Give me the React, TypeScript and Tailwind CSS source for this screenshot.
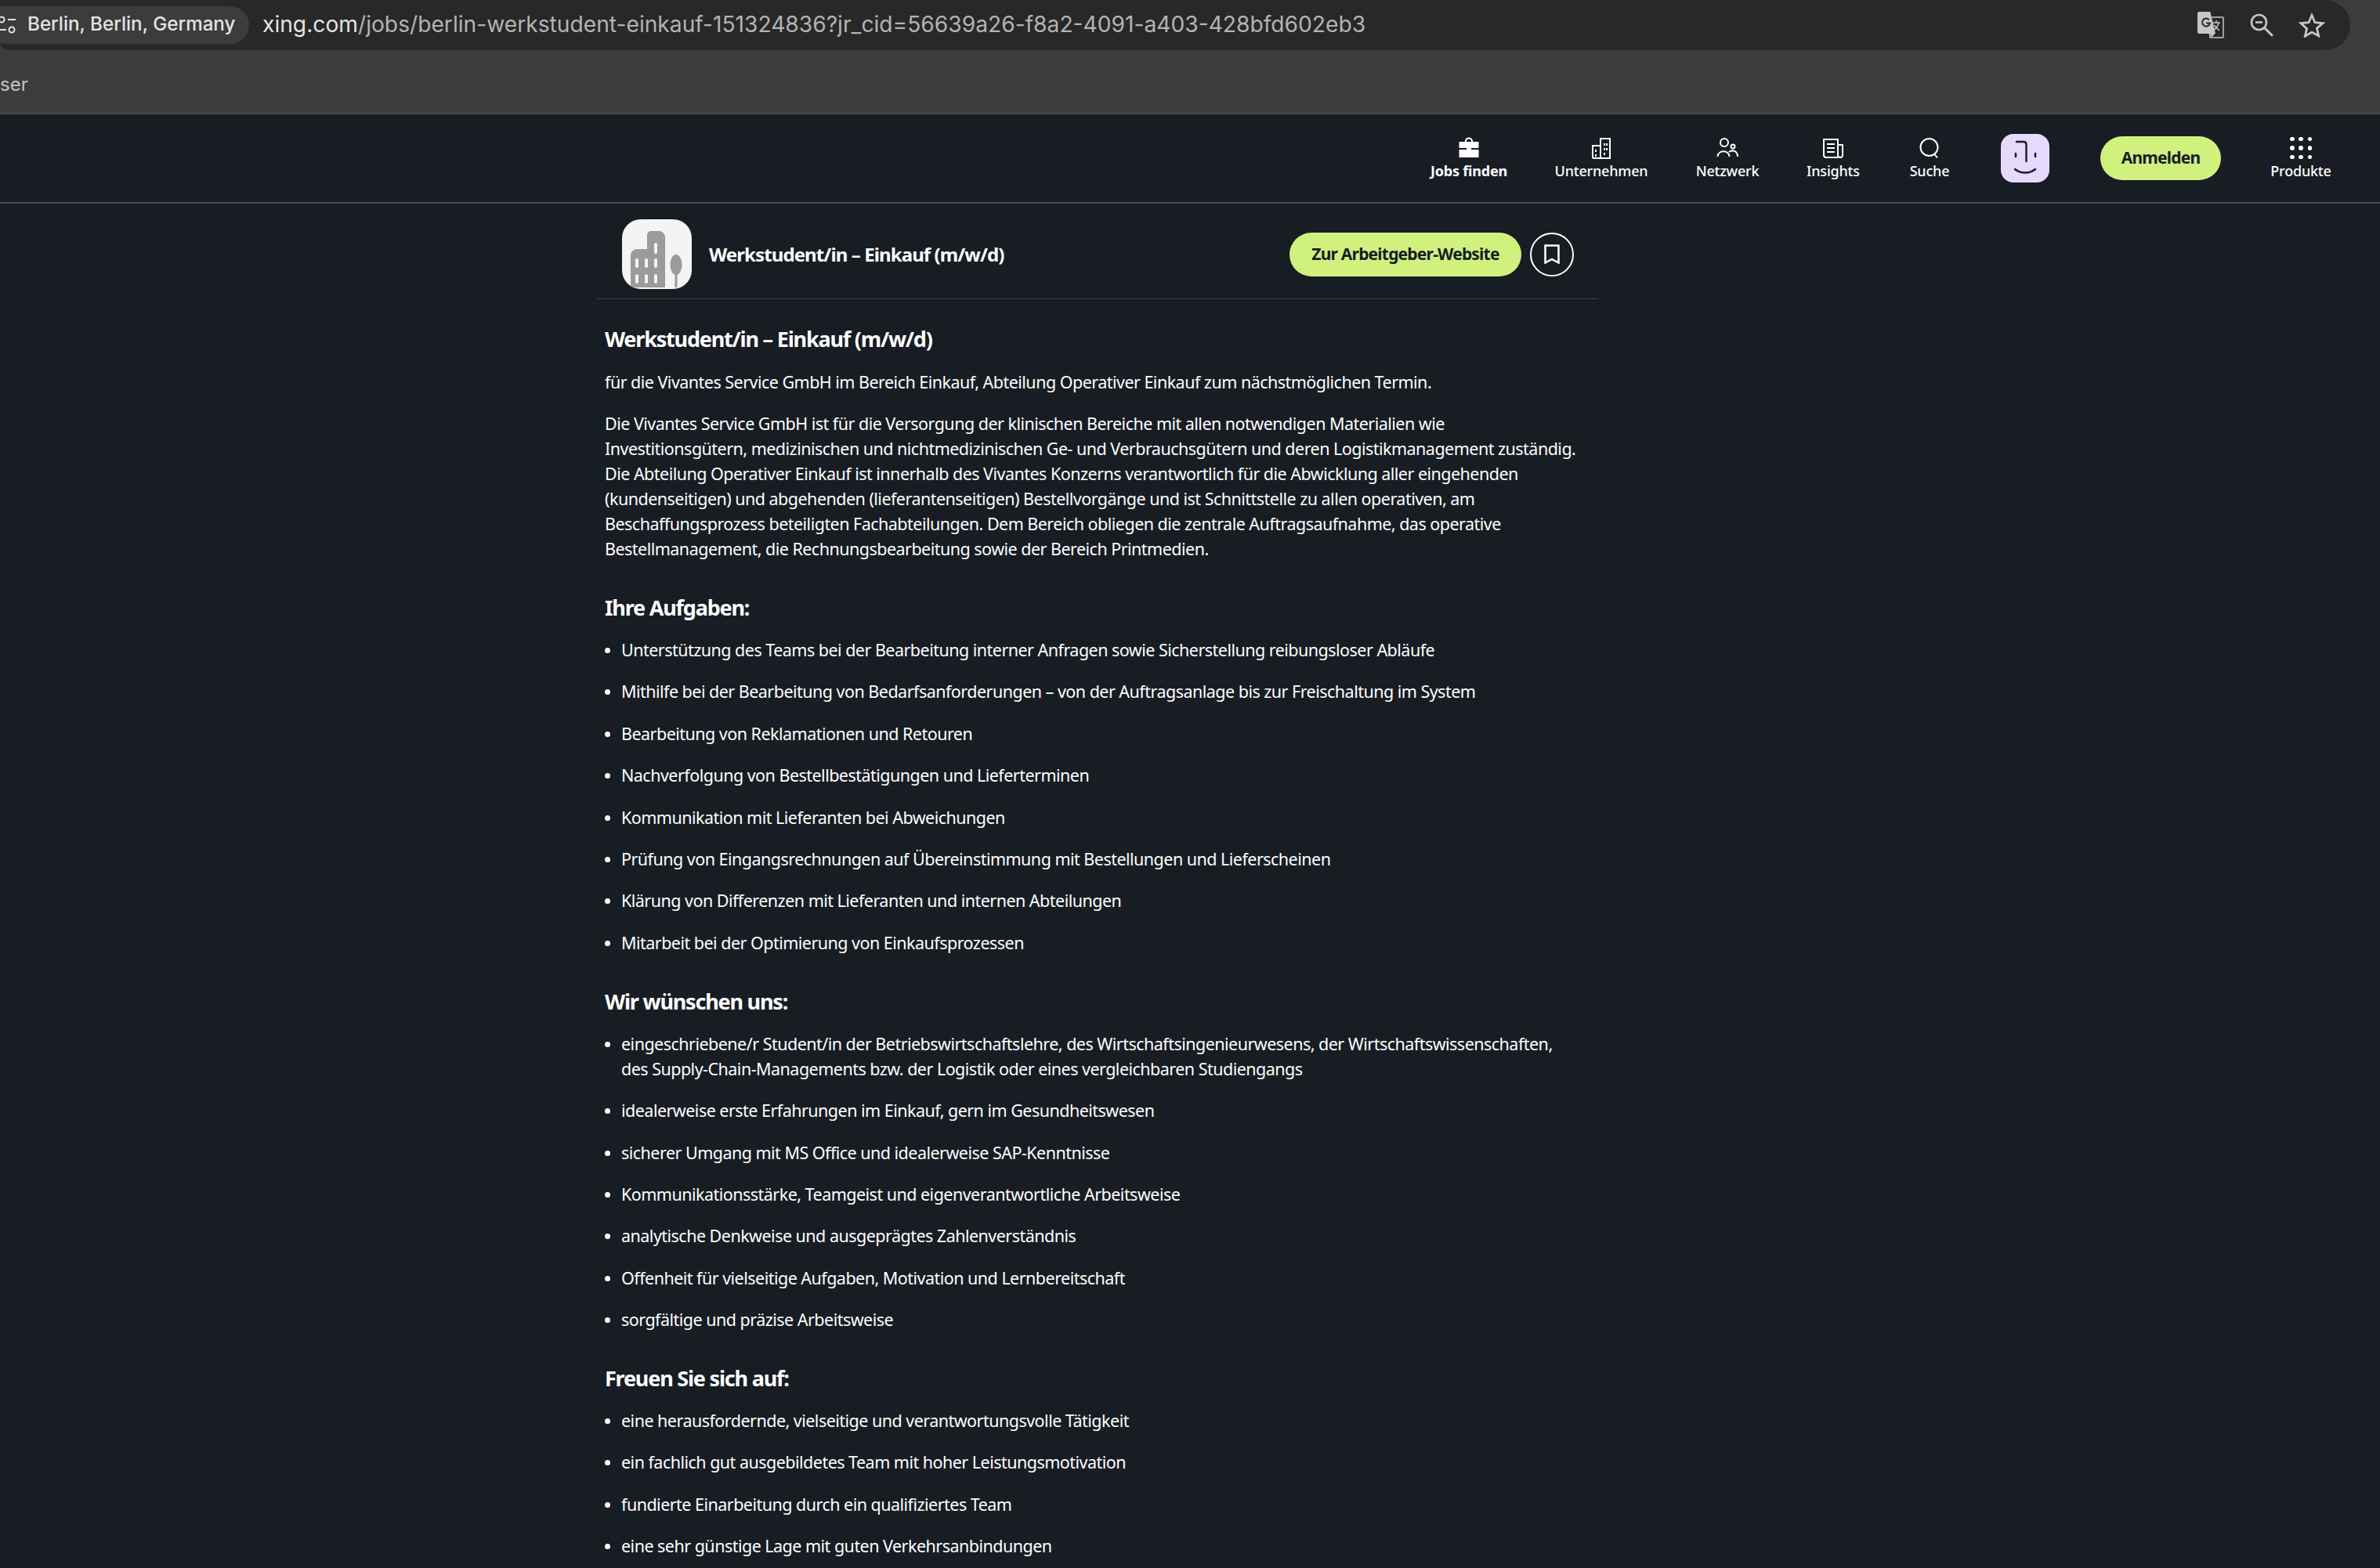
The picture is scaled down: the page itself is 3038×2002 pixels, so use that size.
import type { ReactNode } from 'react';

const NAV = [
  { label: 'Jobs finden', width: 'w-[140px]', icon: 'jobs', bold: true },
  { label: 'Unternehmen', width: 'w-[198px]', icon: 'company' },
  { label: 'Netzwerk', width: 'w-[124px]', icon: 'network' },
  { label: 'Insights', width: 'w-[146px]', icon: 'insights' },
  { label: 'Suche', width: 'w-[100px]', icon: 'search' },
];

const AUFGABEN = [
  'Unterstützung des Teams bei der Bearbeitung interner Anfragen sowie Sicherstellung reibungsloser Abläufe',
  'Mithilfe bei der Bearbeitung von Bedarfsanforderungen – von der Auftragsanlage bis zur Freischaltung im System',
  'Bearbeitung von Reklamationen und Retouren',
  'Nachverfolgung von Bestellbestätigungen und Lieferterminen',
  'Kommunikation mit Lieferanten bei Abweichungen',
  'Prüfung von Eingangsrechnungen auf Übereinstimmung mit Bestellungen und Lieferscheinen',
  'Klärung von Differenzen mit Lieferanten und internen Abteilungen',
  'Mitarbeit bei der Optimierung von Einkaufsprozessen',
];

const WUENSCHE: ReactNode[] = [
  <>eingeschriebene/r Student/in der Betriebswirtschaftslehre, des Wirtschaftsingenieurwesens, der Wirtschaftswissenschaften,<br />des Supply-Chain-Managements bzw. der Logistik oder eines vergleichbaren Studiengangs</>,
  'idealerweise erste Erfahrungen im Einkauf, gern im Gesundheitswesen',
  'sicherer Umgang mit MS Office und idealerweise SAP-Kenntnisse',
  'Kommunikationsstärke, Teamgeist und eigenverantwortliche Arbeitsweise',
  'analytische Denkweise und ausgeprägtes Zahlenverständnis',
  'Offenheit für vielseitige Aufgaben, Motivation und Lernbereitschaft',
  'sorgfältige und präzise Arbeitsweise',
];

const BENEFITS = [
  'eine herausfordernde, vielseitige und verantwortungsvolle Tätigkeit',
  'ein fachlich gut ausgebildetes Team mit hoher Leistungsmotivation',
  'fundierte Einarbeitung durch ein qualifiziertes Team',
  'eine sehr günstige Lage mit guten Verkehrsanbindungen',
];

function NavIcon({ name }: { name: string }) {
  const common = { width: 28, height: 28, viewBox: '0 0 28 28', fill: 'none', stroke: 'white', strokeWidth: 2 };
  if (name === 'jobs') {
    return (
      <svg {...common}>
        <path d="M10 6.500V5a4 3.500 0 0 1 8 0v1.500" />
        <rect x="1.500" y="6" width="25" height="8" fill="white" stroke="none" />
        <rect x="1.500" y="16" width="25" height="10" fill="white" stroke="none" />
        <rect x="11" y="13" width="6" height="3" fill="white" stroke="none" />
      </svg>
    );
  }
  if (name === 'company') {
    return (
      <svg {...common}>
        <path d="M3 27V11h10M13 27V2h12v25H3Z" />
        <path d="M7 16v3M7 22v3M18 8v3M21 8v3M18 14v3M21 14v3M18 20v3" strokeWidth={2} />
      </svg>
    );
  }
  if (name === 'network') {
    return (
      <svg {...common}>
        <circle cx="10" cy="7" r="5" />
        <circle cx="21" cy="12" r="2.500" />
        <path d="M1.500 25c0-9 15-9 15 0M16 19c4-3 11-2 11 6" />
      </svg>
    );
  }
  if (name === 'insights') {
    return (
      <svg {...common}>
        <path d="M20 26H5a3 3 0 0 1-3-3V3h18v20a3 3 0 0 0 6 0V10h-6" />
        <path d="M6 9h10M6 14h10M6 19h10" />
      </svg>
    );
  }
  return (
    <svg {...common}>
      <circle cx="13.500" cy="13" r="11" />
      <path d="M20 21.500l4 5" />
    </svg>
  );
}

function ToolbarIcons() {
  return (
    <div className="flex items-center">
      <svg width="34" height="34" viewBox="0 0 34 34" className="mr-[33px]">
        <path d="M13 7h19a1 1 0 0 1 1 1v24a1 1 0 0 1-1 1H16Z" fill="none" stroke="#c6c6c6" strokeWidth="1.500" />
        <path d="M2 0h14l1 3 6 25H2a2 2 0 0 1-2-2V2a2 2 0 0 1 2-2Z" fill="#c6c6c6" />
        <path d="M16 28h6l-4 5Z" fill="#c6c6c6" />
        <path d="M15 10.500a5 5 0 1 0 1 4h-5" fill="none" stroke="#282828" strokeWidth="2" />
        <path d="M19 14h10M24 11v3M27 14c-1 5-4 8-7 10M21 17l7 7" fill="none" stroke="#c6c6c6" strokeWidth="1.500" />
      </svg>
      <svg width="30" height="30" viewBox="0 0 30 30" className="mr-[32px]">
        <circle cx="11.500" cy="11.500" r="9.500" fill="none" stroke="#c6c6c6" strokeWidth="2.600" />
        <path d="M18.500 18.500L28 28" stroke="#c6c6c6" strokeWidth="3" strokeLinecap="round" />
        <path d="M7 11.500h9" stroke="#c6c6c6" strokeWidth="2.600" />
      </svg>
      <svg width="34" height="32" viewBox="0 0 34 32">
        <path d="M17 3.500l4 9.200 10 .9-7.600 6.500 2.300 9.700L17 25l-8.700 5.300 2.300-9.700L3 13.600l10-.9Z" fill="none" stroke="#c6c6c6" strokeWidth="2.800" strokeLinejoin="miter" />
      </svg>
    </div>
  );
}

function BrowserChrome() {
  return (
    <div className="h-[146px] bg-[#3c3c3c] border-b-2 border-[#4a4a4a]">
      <div className="h-[64px] w-[3000px] bg-[#282828] rounded-r-[32px] rounded-bl-[12px] flex items-center font-['Inter',sans-serif]">
        <div className="h-[48px] w-[318px] bg-[#3c3c3c] rounded-r-[24px] flex items-center shrink-0">
          <svg width="26" height="26" viewBox="0 0 26 26" className="ml-[-4px] mr-[13px] shrink-0">
            <circle cx="6" cy="6" r="3.500" fill="none" stroke="#e3e3e3" strokeWidth="2" />
            <path d="M14 6h10M2 19h10" stroke="#e3e3e3" strokeWidth="2" />
            <circle cx="19" cy="19" r="3.500" fill="none" stroke="#e3e3e3" strokeWidth="2" />
          </svg>
          <span className="text-[24.200px] font-medium text-[#e3e3e3] whitespace-nowrap mt-[-2px]">Berlin, Berlin, Germany</span>
        </div>
        <div className="ml-[17px] mt-[-2px] text-[28.200px] whitespace-nowrap text-[#b4b4b4]">
          <span className="text-[#e3e3e3]">xing.com</span>/jobs/berlin-werkstudent-einkauf-151324836?jr_cid=56639a26-f8a2-4091-a403-428bfd602eb3
        </div>
        <div className="ml-auto mr-[32px]">
          <ToolbarIcons />
        </div>
      </div>
      <div className="h-[80px] pt-[8px] flex items-center text-[24px] text-[#c2c2c2] font-['Inter',sans-serif]">ser</div>
    </div>
  );
}

function TopNav() {
  return (
    <header className="h-[114px] border-b-2 border-[#454b54] flex items-center justify-end pr-[23px] text-white">
      {NAV.map((item) => (
        <div key={item.label} className={`${item.width} flex flex-col items-center mt-[1px]`}>
          <NavIcon name={item.icon} />
          <span className={`text-[18px] tracking-[-0.2px] leading-[26px] mt-[2px] whitespace-nowrap ${item.bold ? 'font-bold' : 'font-medium'}`}>{item.label}</span>
        </div>
      ))}
      <div className="w-[144px] flex justify-center">
        <div className="w-[62px] h-[62px] rounded-[16px] bg-[#e5d9fc] flex items-center justify-center">
          <svg width="44" height="48" viewBox="0 0 44 48" fill="none" stroke="#1a1f27" strokeWidth="2.500" strokeLinecap="round">
            <path d="M11 3h9c2.500 0 3.500 2 3.500 4v21" />
            <path d="M10 18v4M35 18v4" />
            <path d="M9 38c7 6 19 6 26 0" />
          </svg>
        </div>
      </div>
      <div className="w-[202px] flex justify-center">
        <div className="w-[154px] h-[56px] rounded-full bg-[#d0f17e] text-[#181d24] font-bold text-[21px] tracking-[-0.8px] flex items-center justify-center">Anmelden</div>
      </div>
      <div className="w-[156px] flex flex-col items-center mt-[1px]">
        <div className="grid grid-cols-3 gap-x-[6px] gap-y-[6px] h-[28px] w-[28px]">
          {Array.from({ length: 9 }).map((_, i) => (
            <span key={i} className="w-[5.500px] h-[5.500px] rounded-full bg-white" />
          ))}
        </div>
        <span className="text-[18px] tracking-[-0.2px] leading-[26px] mt-[2px] font-medium">Produkte</span>
      </div>
    </header>
  );
}

function CompanyLogo() {
  return (
    <div className="w-[89px] h-[89px] rounded-[24px] bg-[#f4f4f4] overflow-hidden">
      <svg width="89" height="89" viewBox="0 0 89 89">
        <path d="M11 87V46a8 8 0 0 1 8-8h13V20a5 5 0 0 1 5-5h11a8 8 0 0 1 7 8v64Z" fill="#9b9b9b" />
        <rect x="41" y="30" width="4" height="14" rx="2" fill="#f4f4f4" />
        {[17, 29, 41].map((x) => (
          <g key={x}>
            <rect x={x} y="50" width="4" height="12" rx="2" fill="#f4f4f4" />
            <rect x={x} y="70" width="4" height="12" rx="2" fill="#f4f4f4" />
          </g>
        ))}
        <ellipse cx="69" cy="58" rx="7.500" ry="13" fill="#9b9b9b" />
        <rect x="67.500" y="65" width="3" height="22" fill="#9b9b9b" />
      </svg>
    </div>
  );
}

function JobHeader() {
  return (
    <div className="h-[122px] pt-[8px] w-[1278px] border-b border-[#3d424a] flex items-center pl-[32px] pr-[31px] text-white">
      <CompanyLogo />
      <h2 className="ml-[22px] text-[24px] font-bold tracking-[-0.9px] whitespace-nowrap">Werkstudent/in – Einkauf (m/w/d)</h2>
      <div className="ml-auto w-[296px] h-[56px] rounded-full bg-[#d0f17e] text-[#181d24] font-bold text-[21px] tracking-[-0.8px] flex items-center justify-center">Zur Arbeitgeber-Website</div>
      <div className="ml-[11px] w-[56px] h-[56px] rounded-full border-2 border-white flex items-center justify-center">
        <svg width="20" height="26" viewBox="0 0 20 26" fill="none" stroke="white" strokeWidth="2.500">
          <path d="M1.500 1.500h17v22L10 19l-8.500 4.500Z" />
        </svg>
      </div>
    </div>
  );
}

function BulletList({ items }: { items: ReactNode[] }) {
  return (
    <ul className="flex flex-col gap-[21.400px] mt-[20px]">
      {items.map((item, i) => (
        <li key={i} className="flex">
          <span className="w-[7px] h-[7px] rounded-full bg-white mt-[13px] mr-[14px] shrink-0" />
          <span>{item}</span>
        </li>
      ))}
    </ul>
  );
}

function SectionTitle({ children }: { children: ReactNode }) {
  return <h3 className="text-[27px] leading-[36px] font-bold tracking-[-1.2px] mt-[41px]">{children}</h3>;
}

export default function App() {
  return (
    <div className="h-[2002px] overflow-hidden bg-[#181d24] font-['Noto_Sans',sans-serif]">
      <BrowserChrome />
      <TopNav />
      <main className="ml-[762px]">
        <JobHeader />
        <article className="ml-[10px] mt-[33px] text-white text-[21.500px] leading-[32px] tracking-[-0.52px] whitespace-nowrap">
          <h1 className="text-[27px] leading-[36px] font-bold tracking-[-1.2px]">Werkstudent/in – Einkauf (m/w/d)</h1>
          <p className="mt-[21px]">für die Vivantes Service GmbH im Bereich Einkauf, Abteilung Operativer Einkauf zum nächstmöglichen Termin.</p>
          <p className="mt-[21px]">
            Die Vivantes Service GmbH ist für die Versorgung der klinischen Bereiche mit allen notwendigen Materialien wie<br />
            Investitionsgütern, medizinischen und nichtmedizinischen Ge- und Verbrauchsgütern und deren Logistikmanagement zuständig.<br />
            Die Abteilung Operativer Einkauf ist innerhalb des Vivantes Konzerns verantwortlich für die Abwicklung aller eingehenden<br />
            (kundenseitigen) und abgehenden (lieferantenseitigen) Bestellvorgänge und ist Schnittstelle zu allen operativen, am<br />
            Beschaffungsprozess beteiligten Fachabteilungen. Dem Bereich obliegen die zentrale Auftragsaufnahme, das operative<br />
            Bestellmanagement, die Rechnungsbearbeitung sowie der Bereich Printmedien.
          </p>
          <SectionTitle>Ihre Aufgaben:</SectionTitle>
          <BulletList items={AUFGABEN} />
          <SectionTitle>Wir wünschen uns:</SectionTitle>
          <BulletList items={WUENSCHE} />
          <SectionTitle>Freuen Sie sich auf:</SectionTitle>
          <BulletList items={BENEFITS} />
        </article>
      </main>
    </div>
  );
}
